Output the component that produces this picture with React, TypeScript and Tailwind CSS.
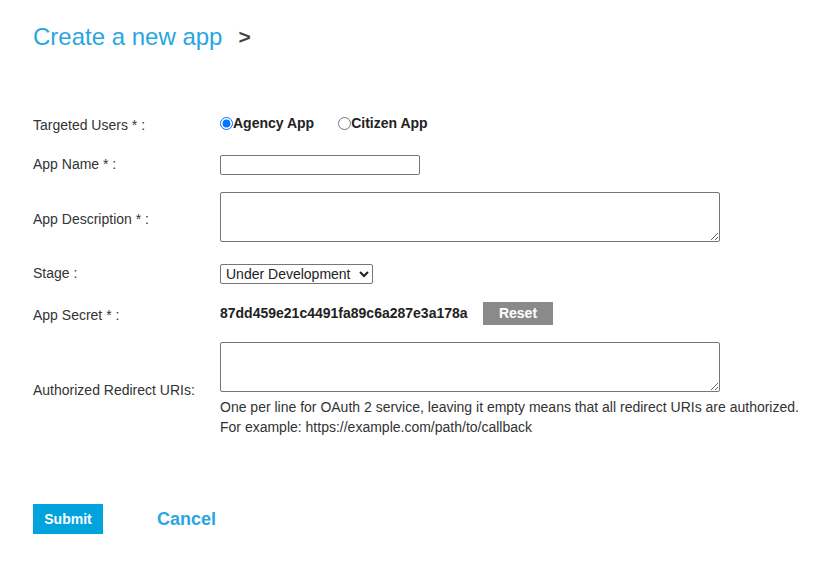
import { useState } from 'react';

export default function App() {
  const [target, setTarget] = useState('agency');

  return (
    <div className="min-h-screen bg-white text-[#333] text-[14px]" style={{ fontFamily: '"Liberation Sans", Arial, sans-serif' }}>
      <div className="pl-[33px] pt-[22px]">
        {/* header */}
        <h1 className="flex items-center text-[24px] leading-[30px] text-[#2aa6df]">
          Create a new app
          <span className="ml-[16px] text-[21px] font-bold text-[#444]">&gt;</span>
        </h1>

        {/* form */}
        <form className="mt-[62px]" onSubmit={e => e.preventDefault()}>
          <div className="flex items-center h-[20px]">
            <label className="w-[187px] pt-[2px]">Targeted Users * :</label>
            <div className="flex items-center font-bold text-[#222] -mt-[1px]">
              <label className="flex items-center">
                <input type="radio" name="target" className="m-0 w-[13px] h-[13px] accent-[#0075ff]" checked={target === 'agency'} onChange={() => setTarget('agency')} />
                Agency App
              </label>
              <label className="flex items-center ml-[24px]">
                <input type="radio" name="target" className="m-0 w-[13px] h-[13px]" checked={target === 'citizen'} onChange={() => setTarget('citizen')} />
                Citizen App
              </label>
            </div>
          </div>

          <div className="flex items-center mt-[20px]">
            <label className="w-[187px]">App Name * :</label>
            <input type="text" className="w-[200px] h-[20px] border border-[#767676] rounded-[2px] outline-none px-1" />
          </div>

          <div className="flex items-center mt-[17px]">
            <label className="w-[187px] pt-[4px]">App Description * :</label>
            <textarea className="w-[500px] h-[50px] border border-[#767676] rounded-[2px] outline-none p-1 block" />
          </div>

          <div className="flex items-center mt-[21px]">
            <label className="w-[187px]">Stage :</label>
            <select className="w-[153px] h-[20px] border border-[#767676] rounded-[2px] text-[14px] text-[#222] pl-[1px] outline-none">
              <option>Under Development</option>
              <option>Production</option>
            </select>
          </div>

          <div className="flex items-center mt-[17px]">
            <label className="w-[187px] pt-[4px]">App Secret * :</label>
            <span className="font-bold text-[14px] text-[#222] w-[263px]">87dd459e21c4491fa89c6a287e3a178a</span>
            <button type="button" className="w-[70px] h-[23px] bg-[#8a8a8a] text-white font-bold text-[14px]">Reset</button>
          </div>

          <div className="flex items-center mt-[16px]">
            <label className="w-[187px] pt-[1px]">Authorized Redirect URIs:</label>
            <div>
              <textarea className="w-[500px] h-[50px] border border-[#767676] rounded-[2px] outline-none p-1 block" />
              <p className="mt-[5px] leading-[20px]">
                One per line for OAuth 2 service, leaving it empty means that all redirect URIs are authorized.
                <br />
                For example: https://example.com/path/to/callback
              </p>
            </div>
          </div>

          <div className="flex items-center mt-[67px]">
            <button type="submit" className="w-[70px] h-[30px] bg-[#00a3dc] text-white font-bold text-[14px]">Submit</button>
            <button type="button" className="ml-[54px] text-[18px] font-bold text-[#2aa6df]">Cancel</button>
          </div>
        </form>
      </div>
    </div>
  );
}
